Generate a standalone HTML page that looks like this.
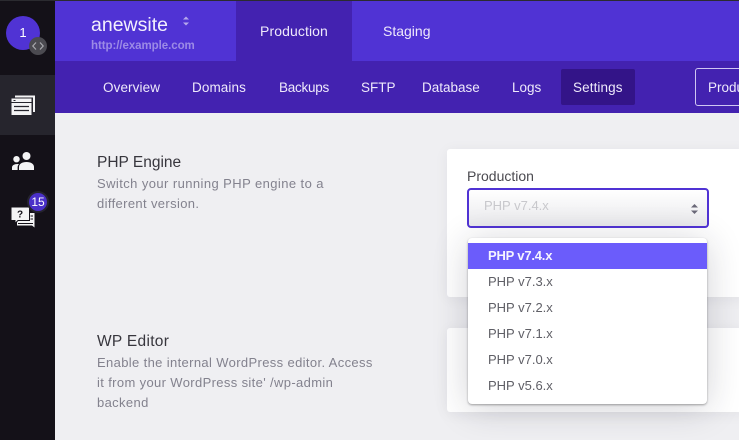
<!DOCTYPE html>
<html><head><meta charset="utf-8">
<style>
html,body{margin:0;padding:0;width:739px;height:440px;overflow:hidden;background:#efeff2;font-family:"Liberation Sans",sans-serif}
.a{position:absolute;white-space:nowrap}
#r{position:relative;width:739px;height:440px;overflow:hidden}
.n{top:80px;font-size:13.5px;color:#eee9fb;line-height:16px}
.o{left:488px;font-size:13px;color:#5f5f66;line-height:16px}
.h{left:97px;font-size:15.5px;color:#37363d;line-height:18px}
.d{left:97px;font-size:13px;color:#83828e;line-height:20px;letter-spacing:.36px}
</style></head><body><div id="r">
<div class="a" style="left:0;top:0;width:739px;height:1px;background:#2b2b30;z-index:5"></div>
<div class="a" style="left:55px;top:0;width:684px;height:61px;background:#5033d4"></div>
<div class="a" style="left:55px;top:61px;width:684px;height:52px;background:#4322b0"></div>
<div class="a" style="left:236px;top:0;width:116px;height:61px;background:#4322b0"></div>
<div class="a" style="left:91px;top:13px;font-size:19.5px;line-height:24px;color:#f3f0fd">anewsite</div>
<svg class="a" style="left:182px;top:15px" width="8" height="12"><path d="M1 4.5L4 1.5L7 4.5Z" fill="#b6a8ec"/><path d="M1 7.5L4 10.5L7 7.5Z" fill="#b6a8ec"/></svg>
<div class="a" style="left:91px;top:39px;font-size:11.5px;line-height:14px;color:#9c8be6;font-weight:bold;letter-spacing:-.06px">http://example.com</div>
<div class="a" style="left:260px;top:23px;font-size:14px;line-height:16px;letter-spacing:.1px;color:#eee9fb">Production</div>
<div class="a" style="left:383px;top:23px;font-size:14px;line-height:16px;color:#eee9fb">Staging</div>
<div class="a n" style="left:103px;letter-spacing:.1px">Overview</div>
<div class="a n" style="left:192px;letter-spacing:.1px">Domains</div>
<div class="a n" style="left:279px;letter-spacing:-.25px">Backups</div>
<div class="a n" style="left:361px">SFTP</div>
<div class="a n" style="left:422px">Database</div>
<div class="a n" style="left:512px">Logs</div>
<div class="a" style="left:561px;top:69px;width:74px;height:36px;background:#331488;border-radius:2px"></div>
<div class="a n" style="left:573px;letter-spacing:.1px">Settings</div>
<div class="a" style="left:695px;top:68px;width:60px;height:36px;border:1px solid #cfc6f2;border-radius:3px;box-sizing:content-box"></div>
<div class="a n" style="left:708px">Production</div>
<div class="a" style="left:0;top:0;width:55px;height:440px;background:#141118"></div>
<div class="a" style="left:0;top:75px;width:55px;height:60px;background:#26252d"></div>
<div class="a" style="left:6px;top:16px;width:34px;height:34px;border-radius:50%;background:#5033d4;color:#fff;font-size:13px;line-height:34px;text-align:center">1</div>
<div class="a" style="left:29px;top:37px;width:18px;height:18px;border-radius:50%;background:#4b4a50"></div>
<svg class="a" style="left:29px;top:37px" width="18" height="18"><path d="M7 5.5L3.8 9L7 12.5M11 5.5L14.2 9L11 12.5" fill="none" stroke="#a9a9ae" stroke-width="1.2"/></svg>
<svg class="a" style="left:11px;top:95px" width="24" height="21"><path d="M4 0.5H24V17H22V2.5H4Z" fill="#f4f4f5"/><path d="M0.5 3.5H20.5V20H0.5Z" fill="#f4f4f5"/><path d="M0.5 7.5H20.5" stroke="#26252d" stroke-width="1"/><path d="M2.5 5.5H4.5" stroke="#26252d" stroke-width="1"/><path d="M3 11.5H18M3 15.5H18" stroke="#26252d" stroke-width="1.2"/></svg>
<svg class="a" style="left:11px;top:151px" width="24" height="20"><circle cx="15.5" cy="5" r="4" fill="#f4f4f5"/><circle cx="5.5" cy="8.2" r="3.2" fill="#f4f4f5"/><path d="M8 19V16C8 13 11 11 15.5 11C20 11 23 13 23 16V19Z" fill="#f4f4f5"/><path d="M1 19V16.5C1 14.5 3 13 6.5 13C7.2 13 7.6 13.1 8 13.3C7 14.2 6.6 15 6.6 16.5V19Z" fill="#f4f4f5"/></svg>
<svg class="a" style="left:11px;top:206px" width="24" height="22"><path d="M6 7H23.5V21.5L21 19.5H6Z" fill="#f4f4f5"/><path d="M19.5 10H22M19.5 13H22M7 17.5H22" stroke="#141118" stroke-width="1"/><path d="M0 1H18.5V14.5H7L4 17.5V14.5H0Z" fill="#f4f4f5" stroke="#141118" stroke-width="1"/><text x="9" y="11.5" text-anchor="middle" font-family="Liberation Sans" font-weight="bold" font-size="10" fill="#141118">?</text></svg>
<div class="a" style="left:29px;top:193px;width:18px;height:18px;border-radius:50%;background:#4a30c8;box-shadow:0 0 0 2px #25232e;color:#fff;font-size:12px;line-height:18px;text-align:center">15</div>
<div class="a h" style="top:154px">PHP Engine</div>
<div class="a d" style="top:174px;letter-spacing:.42px">Switch your running PHP engine to a</div>
<div class="a d" style="top:194px">different version.</div>
<div class="a h" style="top:333px;letter-spacing:.3px">WP Editor</div>
<div class="a d" style="top:353px">Enable the internal WordPress editor. Access</div>
<div class="a d" style="top:373px">it from your WordPress site' /wp-admin</div>
<div class="a d" style="top:393px">backend</div>
<div class="a" style="left:447px;top:149px;width:300px;height:148px;background:#fff;border-radius:3px;box-shadow:0 2px 14px rgba(30,30,50,.06)"></div>
<div class="a" style="left:447px;top:328px;width:300px;height:84px;background:#fff;border-radius:3px;box-shadow:0 2px 14px rgba(30,30,50,.06)"></div>
<div class="a" style="left:467px;top:168px;font-size:14px;line-height:16px;color:#4b4a50">Production</div>
<div class="a" style="left:467px;top:188px;width:238px;height:36px;border:2px solid #5033d4;border-radius:4px;background:linear-gradient(#fff,#e9e9ec)"></div>
<div class="a" style="left:484px;top:198px;font-size:13px;line-height:16px;color:#c8c8cc">PHP v7.4.x</div>
<svg class="a" style="left:690px;top:202px" width="9" height="14"><path d="M1 5.5L4.5 2L8 5.5Z" fill="#6a6878"/><path d="M1 8.5L4.5 12L8 8.5Z" fill="#6a6878"/></svg>
<div class="a" style="left:468px;top:238px;width:239px;height:166px;background:#fff;border-radius:4px;box-shadow:0 1px 2px rgba(0,0,0,.35),0 4px 36px rgba(30,30,50,.2)"></div>
<div class="a" style="left:468px;top:243px;width:239px;height:26px;background:#6b5cfb"></div>
<div class="a o" style="top:248px;color:#f5f4ff;font-weight:bold;letter-spacing:-.2px">PHP v7.4.x</div>
<div class="a o" style="top:274px">PHP v7.3.x</div>
<div class="a o" style="top:300px">PHP v7.2.x</div>
<div class="a o" style="top:326px">PHP v7.1.x</div>
<div class="a o" style="top:352px">PHP v7.0.x</div>
<div class="a o" style="top:378px">PHP v5.6.x</div>
</div></body></html>
